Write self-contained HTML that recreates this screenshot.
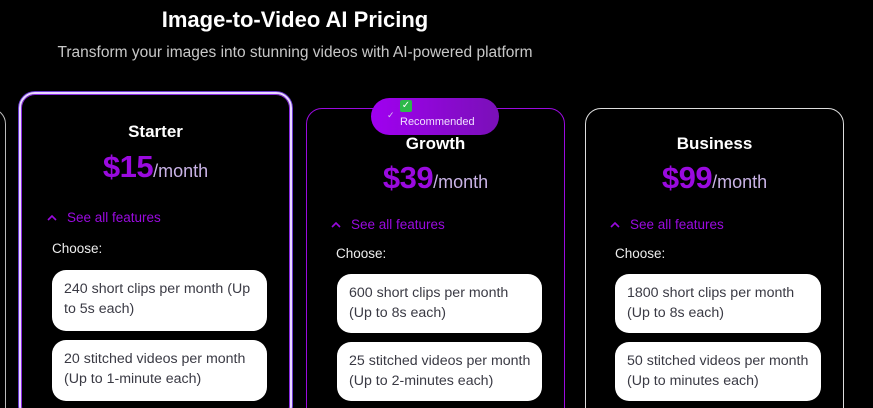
<!DOCTYPE html><html><head><style>
html,body{margin:0;width:873px;height:408px;overflow:hidden}
body{background:#000;font-family:"Liberation Sans",sans-serif;position:relative}
.a{position:absolute}
h1{position:absolute;left:0;width:590px;top:7px;margin:0;text-align:center;color:#fff;font-size:22px;font-weight:bold}
.sub{left:0;width:590px;top:44px;text-align:center;color:#c8c8c8;font-size:15.5px}
.card{position:absolute;border-radius:16px;background:#000;box-sizing:border-box}
.t{position:absolute;left:0;right:0;text-align:center;color:#fff;font-weight:bold;font-size:17px}
.p{position:absolute;left:0;right:0;text-align:center;color:#c9b3e6;font-size:18px}
.p b{color:#9a0adf;font-size:31px;letter-spacing:-0.5px}
.s{position:absolute;color:#9a0adf;font-size:13.5px}
.s svg{position:absolute;left:-20px;top:4px}
.c{position:absolute;color:#eee;font-size:13.5px}
.pill{position:absolute;background:#fff;border-radius:14px;color:#3a3a44;font-size:14.2px;line-height:20px;padding:9px 10px 9px 12px;box-sizing:border-box}
</style></head><body>
<h1>Image-to-Video AI Pricing</h1>
<div class="a sub">Transform your images into stunning videos with AI-powered platform</div>
<div class="card" style="left:-40px;top:108px;width:46px;height:320px;border:1px solid #bbb"></div>

<div class="card" style="left:19px;top:92px;width:273px;height:330px;border:2px solid #e9d8ff;box-shadow:0 0 0 1px #6a3bd0,inset 0 0 0 1px #8a2be2">
<div class="t" style="top:28px">Starter</div>
<div class="p" style="top:55px"><b>$15</b>/month</div>
<div class="s" style="left:46px;top:116px"><svg width="10" height="7" viewBox="0 0 10 7"><path d="M1 6L5 2L9 6" stroke="#9a0adf" stroke-width="1.6" fill="none"/></svg>See all features</div>
<div class="c" style="left:31px;top:147px">Choose:</div>
<div class="pill" style="left:31px;top:176px;width:215px;height:61px">240 short clips per month (Up to 5s each)</div>
<div class="pill" style="left:31px;top:246px;width:215px;height:61px">20 stitched videos per month (Up to 1-minute each)</div>
</div>

<div class="card" style="left:306px;top:108px;width:259px;height:320px;border:1px solid #9a0adf">
<div class="t" style="top:25px">Growth</div>
<div class="p" style="top:51px"><b>$39</b>/month</div>
<div class="s" style="left:44px;top:108px"><svg width="10" height="7" viewBox="0 0 10 7"><path d="M1 6L5 2L9 6" stroke="#9a0adf" stroke-width="1.6" fill="none"/></svg>See all features</div>
<div class="c" style="left:29px;top:137px">Choose:</div>
<div class="pill" style="left:30px;top:165px;width:205px;height:59px">600 short clips per month (Up to 8s each)</div>
<div class="pill" style="left:30px;top:233px;width:205px;height:59px">25 stitched videos per month (Up to 2-minutes each)</div>
</div>
<div class="a" style="left:371px;top:98px;width:128px;height:37px;border-radius:19px;background:linear-gradient(90deg,#a000f0,#7a10b8)">
<div class="a" style="left:16px;top:12px;color:#d9c4f0;font-size:9px">✓</div>
<div class="a" style="left:29px;top:2px;width:12px;height:12px;background:#2db84a;border-radius:2px;color:#fff;font-size:10px;line-height:12px;text-align:center">✓</div>
<div class="a" style="left:29px;top:18px;color:#f0e0ff;font-size:11px">Recommended</div>
</div>

<div class="card" style="left:585px;top:108px;width:259px;height:320px;border:1px solid #ddd">
<div class="t" style="top:25px">Business</div>
<div class="p" style="top:51px"><b>$99</b>/month</div>
<div class="s" style="left:44px;top:108px"><svg width="10" height="7" viewBox="0 0 10 7"><path d="M1 6L5 2L9 6" stroke="#9a0adf" stroke-width="1.6" fill="none"/></svg>See all features</div>
<div class="c" style="left:29px;top:137px">Choose:</div>
<div class="pill" style="left:29px;top:165px;width:206px;height:59px">1800 short clips per month (Up to 8s each)</div>
<div class="pill" style="left:29px;top:233px;width:206px;height:59px">50 stitched videos per month (Up to minutes each)</div>
</div>
</body></html>
